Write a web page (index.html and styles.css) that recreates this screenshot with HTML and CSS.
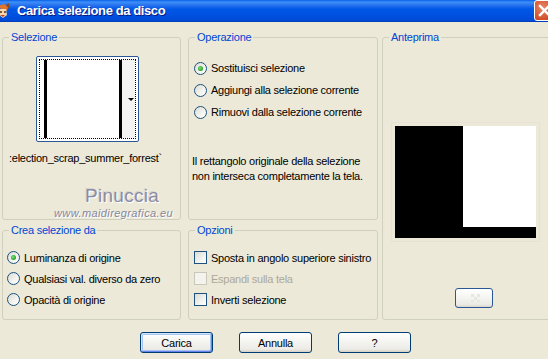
FILE: index.html
```html
<!DOCTYPE html>
<html lang="it">
<head>
  <meta charset="UTF-8" />
  <title>Carica selezione da disco</title>
  <link rel="stylesheet" href="styles.css">
</head>
<body>
  <div class="dialog">
    <div class="titlebar">
      <svg class="app-icon" width="12" height="16" viewBox="0 0 12 16">
        <path d="M0 3 L6 1 L10 4 L9 8 L4 7 Z" fill="#e0742c"/>
        <path d="M1 6 L8 6 L9 12 L5 15 L1 12 Z" fill="#f6d7b0"/>
        <circle cx="3" cy="9" r="1" fill="#5a2a10"/>
        <circle cx="7" cy="9" r="1" fill="#5a2a10"/>
        <path d="M2 12 L7 12 L5 14 Z" fill="#c0401e"/>
        <path d="M8 2 L11 0 L11 6 Z" fill="#8a4a1c"/>
      </svg>
      <span class="title">Carica selezione da disco</span>
      <div class="close-btn">
        <svg width="13" height="13" viewBox="0 0 13 13">
          <path d="M2 2 L11 11 M11 2 L2 11" stroke="#fff" stroke-width="2.4" stroke-linecap="square"/>
        </svg>
      </div>
    </div>

    <div class="content">
      <fieldset class="group sel">
        <legend>Selezione</legend>
        <div class="thumb">
          <div class="thumb-inner">
            <span class="bar"></span>
            <span class="thumb-white"></span>
            <span class="bar"></span>
            <span class="thumb-drop"><span class="arrow"></span></span>
          </div>
        </div>
        <div class="filename">:election_scrap_summer_forrest`</div>
        <div class="mark">Pinuccia</div>
        <div class="mark-url">www.maidiregrafica.eu</div>
      </fieldset>

      <fieldset class="group mid">
        <legend>Operazione</legend>
        <div class="options op-list">
          <div class="opt"><span class="radio checked"></span>Sostituisci selezione</div>
          <div class="opt"><span class="radio"></span>Aggiungi alla selezione corrente</div>
          <div class="opt"><span class="radio"></span>Rimuovi dalla selezione corrente</div>
        </div>
        <p class="note">Il rettangolo originale della selezione<br>non interseca completamente la tela.</p>
      </fieldset>

      <fieldset class="group preview-group">
        <legend>Anteprima</legend>
        <div class="preview">
          <span class="preview-white"></span>
        </div>
        <div class="small-btn">
          <svg width="14" height="8" viewBox="0 0 14 8">
            <rect x="4" y="0" width="3" height="3" fill="#e6e6e2"/>
            <rect x="7" y="3" width="3" height="3" fill="#e6e6e2"/>
            <rect x="4" y="6" width="3" height="2" fill="#e6e6e2"/>
            <rect x="10" y="0" width="3" height="3" fill="#e6e6e2"/>
            <rect x="10" y="6" width="3" height="2" fill="#e6e6e2"/>
          </svg>
        </div>
      </fieldset>

      <fieldset class="group sel">
        <legend>Crea selezione da</legend>
        <div class="options small-list">
          <div class="opt row"><span class="radio checked"></span>Luminanza di origine</div>
          <div class="opt row"><span class="radio"></span>Qualsiasi val. diverso da zero</div>
          <div class="opt row"><span class="radio"></span>Opacità di origine</div>
        </div>
      </fieldset>

      <fieldset class="group mid">
        <legend>Opzioni</legend>
        <div class="options small-list opz">
          <div class="opt row"><span class="check"></span>Sposta in angolo superiore sinistro</div>
          <div class="opt row disabled"><span class="check"></span>Espandi sulla tela</div>
          <div class="opt row"><span class="check"></span>Inverti selezione</div>
        </div>
      </fieldset>
    </div>

    <div class="buttons">
      <button class="btn default">Carica</button>
      <button class="btn">Annulla</button>
      <button class="btn">?</button>
    </div>
  </div>
</body>
</html>
```

FILE: styles.css
```css
body {
  margin: 0;
  width: 548px;
  height: 359px;
  overflow: hidden;
  background: #ece9d8;
  font-family: 'Liberation Sans', Arial, sans-serif;
  font-size: 11px;
  letter-spacing: -0.25px;
  color: #000;
}
.dialog {
  width: 548px;
  height: 359px;
  overflow: hidden;
}
.titlebar {
  height: 22px;
  display: flex;
  align-items: center;
  background: linear-gradient(#0a5fe5 0, #3d8ff9 2px, #2a74ee 5px, #0058e6 9px, #0054e3 60%, #0049d6 100%);
  border-bottom: 1px solid #003fb8;
  box-sizing: border-box;
}
.app-icon {
  margin-left: -2px;
}
.title {
  margin-left: 7px;
  color: #fff;
  font-weight: bold;
  font-size: 13px;
  letter-spacing: -0.4px;
  text-shadow: 1px 1px #0a1883;
}
.close-btn {
  flex-shrink: 0;
  margin-left: auto;
  margin-right: -7px;
  width: 21px;
  height: 21px;
  box-sizing: border-box;
  border: 1px solid #fff;
  border-radius: 3px;
  background: radial-gradient(circle at 40% 35%, #e9866a 0, #d95a36 55%, #c0391a 100%);
  display: flex;
  align-items: center;
  justify-content: center;
}
.content {
  display: grid;
  grid-template-columns: 179px 197px 176px;
  grid-template-rows: 189px 96px;
  row-gap: 4px;
  padding: 9px 0 0 2px;
}
.group {
  margin: 0;
  padding: 0;
  min-width: 0;
  border: 1px solid #d0d0bf;
  border-radius: 3px;
}
.group legend {
  margin-left: 6px;
  padding: 0 2px;
  line-height: 13px;
  color: #0046d5;
}
.mid {
  margin-left: 7px;
}
.preview-group {
  margin-left: 4px;
  grid-column: 3;
  grid-row: 1 / 3;
}

/* Selezione */
.thumb {
  margin: 12px 0 0 33px;
  width: 103px;
  height: 86px;
  box-sizing: border-box;
  padding: 2px;
  border: 1px solid #2b5797;
  border-radius: 2px;
  background: #fff;
}
.thumb-inner {
  height: 100%;
  box-sizing: border-box;
  border: 1px dotted #000;
  display: flex;
  padding-left: 4px;
}
.bar {
  width: 3px;
  background: #000;
}
.thumb-white {
  width: 72px;
}
.thumb-drop {
  flex: 1;
  background: #f3f3f1;
  display: flex;
  align-items: center;
  justify-content: flex-end;
  padding-right: 1px;
}
.arrow {
  width: 0;
  height: 0;
  border-left: 3px solid transparent;
  border-right: 3px solid transparent;
  border-top: 3px solid #000;
}
.filename {
  margin: 10px 0 0 6px;
  line-height: 13px;
  white-space: nowrap;
}
.mark {
  margin: 21px 0 0 82px;
  font-size: 19px;
  line-height: 20px;
  letter-spacing: 0.3px;
  color: #8c8ca4;
  text-shadow: 1px 1px 0 #fff, -1px -1px 0 #d8d6cc;
}
.mark-url {
  margin: 1px 0 0 51px;
  font-size: 11px;
  font-style: italic;
  line-height: 12px;
  letter-spacing: 0.4px;
  color: #86869a;
  text-shadow: 1px 1px 0 #fff;
}

/* options */
.opt {
  display: flex;
  align-items: center;
  gap: 4px;
  height: 22px;
  padding-left: 5px;
  white-space: nowrap;
}
.op-list {
  margin-top: 13px;
}
.small-list {
  margin-top: 10px;
}
.small-list .opt {
  height: 21px;
  padding-left: 4px;
}
.small-list.opz .opt {
  padding-left: 5px;
}
.radio {
  width: 13px;
  height: 13px;
  box-sizing: border-box;
  border: 1px solid #1c5180;
  border-radius: 50%;
  background: linear-gradient(135deg, #dcdcd4 0, #f4f4f0 60%, #fff 100%);
  display: flex;
  align-items: center;
  justify-content: center;
}
.radio.checked::after {
  content: "";
  width: 5px;
  height: 5px;
  border-radius: 50%;
  background: radial-gradient(circle at 40% 40%, #7fe07f 0, #2fa82f 60%, #1a8a1a 100%);
}
.check {
  width: 13px;
  height: 13px;
  box-sizing: border-box;
  border: 1px solid #1c5180;
  background: linear-gradient(135deg, #dcdcd4 0, #f2f2ee 60%, #fff 100%);
}
.disabled {
  color: #aca899;
}
.disabled .check {
  border-color: #cac8bb;
  background: #f4f3ee;
}
.note {
  margin: 31px 0 0 3px;
  line-height: 15px;
}

/* Anteprima */
.preview {
  margin: 82px 0 0 12px;
  width: 141px;
  height: 112px;
  background: #000;
  display: flex;
  justify-content: flex-end;
  outline: 1px solid #e6e3d4;
  outline-offset: 3px;
}
.preview-white {
  width: 73px;
  height: 101px;
  background: #fff;
}
.small-btn {
  margin: 50px 0 0 72px;
  width: 38px;
  height: 20px;
  box-sizing: border-box;
  border: 1px solid #2b5797;
  border-radius: 3px;
  background: linear-gradient(#fff 0, #f4f4f0 50%, #ebeae4 85%, #d9d5cb 100%);
  display: flex;
  align-items: center;
  justify-content: center;
}

/* buttons */
.buttons {
  display: flex;
  gap: 26px;
  margin-top: 12px;
  padding-left: 140px;
}
.btn {
  width: 73px;
  height: 21px;
  padding: 0;
  font-family: inherit;
  font-size: 11px;
  letter-spacing: -0.25px;
  color: #000;
  border: 1px solid #003c74;
  border-radius: 3px;
  background: linear-gradient(#fff 0, #f5f5f2 40%, #ecebe6 85%, #d6d0c5 100%);
}
.btn.default {
  box-shadow: inset 1px 1px 0 #cee7ff, inset -1px -1px 0 #6982ee, inset 0 0 0 2px #a8c4f0;
}
```
